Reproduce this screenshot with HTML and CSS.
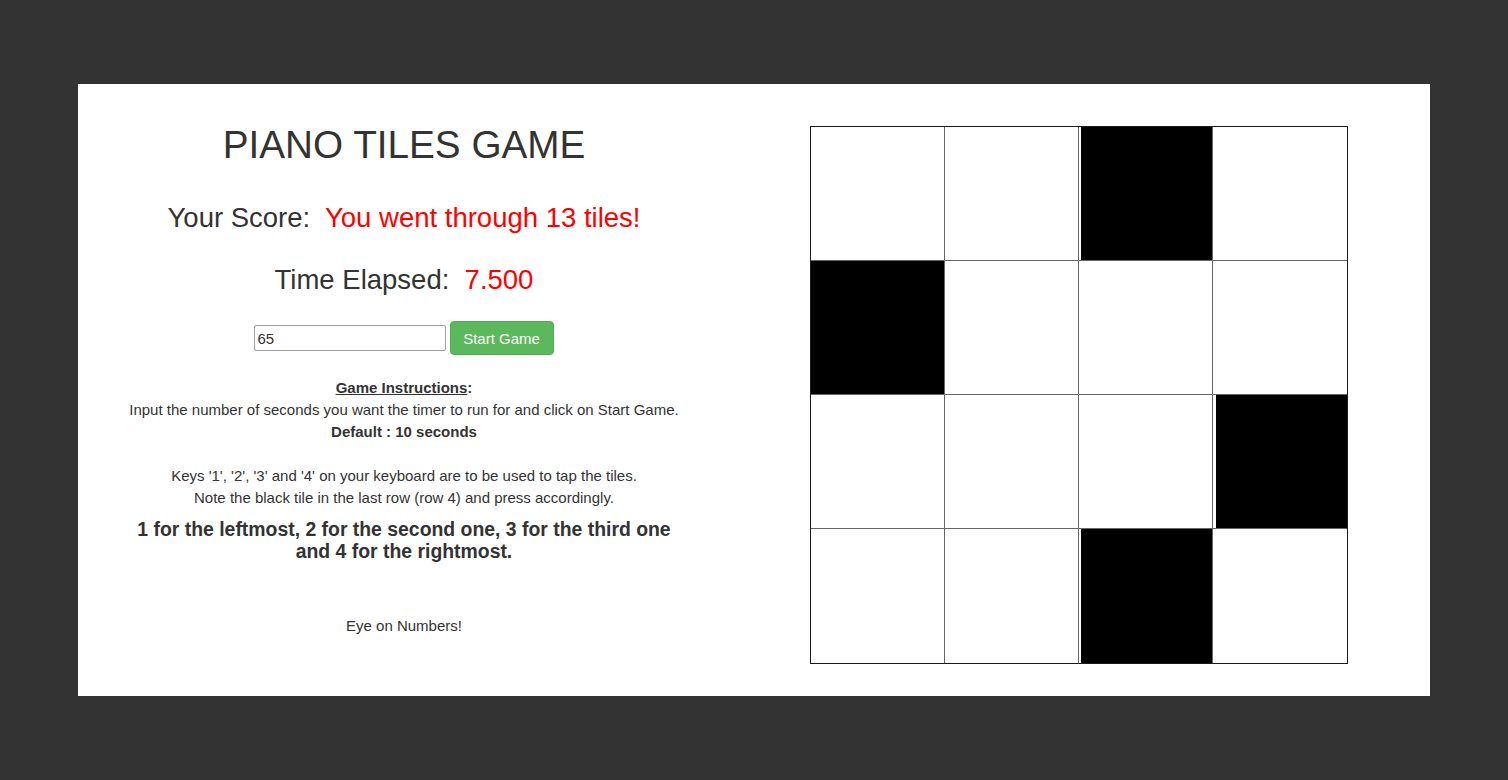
FILE: index.html
```html
<!DOCTYPE html>
<html>
<head>
<meta charset="utf-8">
<title>Piano Tiles Game</title>
<link rel="stylesheet" href="styles.css">
</head>
<body>
<div class="panel">
  <div class="info">
    <h1 class="title">PIANO TILES GAME</h1>
    <div class="stat stat-score">Your Score:&nbsp; <span class="red">You went through 13 tiles!</span></div>
    <div class="stat stat-time">Time Elapsed:&nbsp; <span class="red">7.500</span></div>
    <div class="controls">
      <input class="seconds" type="text" value="65">
      <button class="start">Start Game</button>
    </div>
    <div class="instructions">
      <div><b><u>Game Instructions</u>:</b></div>
      <div>Input the number of seconds you want the timer to run for and click on Start Game.</div>
      <div><b>Default : 10 seconds</b></div>
      <div>&nbsp;</div>
      <div>Keys '1', '2', '3' and '4' on your keyboard are to be used to tap the tiles.</div>
      <div>Note the black tile in the last row (row 4) and press accordingly.</div>
    </div>
    <div class="keys">1 for the leftmost, 2 for the second one, 3 for the third one<br>and 4 for the rightmost.</div>
    <div class="footer">Eye on Numbers!</div>
  </div>
  <div class="game">
    <div class="board">
      <div class="cell"></div><div class="cell"></div><div class="cell black gap"></div><div class="cell"></div>
      <div class="cell black"></div><div class="cell"></div><div class="cell"></div><div class="cell"></div>
      <div class="cell"></div><div class="cell"></div><div class="cell"></div><div class="cell black gap wide"></div>
      <div class="cell"></div><div class="cell"></div><div class="cell black gap"></div><div class="cell"></div>
    </div>
  </div>
</div>
</body>
</html>
```

FILE: styles.css
```css
html, body {
  margin: 0;
  padding: 0;
  background: #333333;
}
body {
  font-family: "Liberation Sans", Arial, sans-serif;
  color: #333333;
  padding: 84px 78px 84px 78px;
}
.panel {
  background: #ffffff;
  display: grid;
  grid-template-columns: 652px 1fr;
  height: 612px;
}
.info {
  display: flex;
  flex-direction: column;
  align-items: center;
  text-align: center;
  padding-top: 39px;
}
.title {
  margin: 0;
  font-size: 38.7px;
  line-height: 44px;
  font-weight: normal;
}
.stat {
  font-size: 27.5px;
  line-height: 32px;
}
.stat-score { margin-top: 35px; }
.stat-time { margin-top: 30px; }
.red { color: #ff0000; }
.controls {
  display: flex;
  align-items: center;
  gap: 4px;
  margin-top: 25px;
  margin-left: -1px;
}
.seconds {
  width: 192px;
  height: 26px;
  box-sizing: border-box;
  border: 1px solid #a0a0a0;
  border-radius: 2px;
  padding: 1px 3px;
  font-family: "Liberation Sans", Arial, sans-serif;
  font-size: 15px;
  color: #333;
  margin: 0;
}
.start {
  height: 34px;
  width: 104px;
  background: #5cb85c;
  color: #ffffff;
  border: 1px solid #4cae4c;
  border-radius: 4px;
  font-family: "Liberation Sans", Arial, sans-serif;
  font-size: 15px;
  padding: 0;
  margin: 0;
}
.instructions {
  margin-top: 22px;
  font-size: 15px;
  line-height: 22px;
}
.keys {
  margin-top: 9px;
  font-size: 19.4px;
  font-weight: bold;
  line-height: 22px;
}
.footer {
  margin-top: 53px;
  font-size: 15px;
  line-height: 22px;
}
.game {
  display: flex;
  justify-content: flex-start;
  padding-top: 42px;
  padding-left: 80px;
}
.board {
  width: 538px;
  height: 538px;
  box-sizing: border-box;
  border: 1.5px solid #1a1a1a;
  display: grid;
  grid-template-columns: repeat(4, 1fr);
  grid-template-rows: repeat(4, 1fr);
}
.cell {
  background: #ffffff;
  border-right: 1.5px solid #666;
  border-bottom: 1.5px solid #666;
}
.cell:nth-child(4n) { border-right: none; }
.cell:nth-child(n+13) { border-bottom: none; }
.cell.black { background: #000000; }
.cell.gap { box-shadow: inset 2px 0 0 #ffffff; }
.cell.wide { box-shadow: inset 3px 0 0 #ffffff; }
```
